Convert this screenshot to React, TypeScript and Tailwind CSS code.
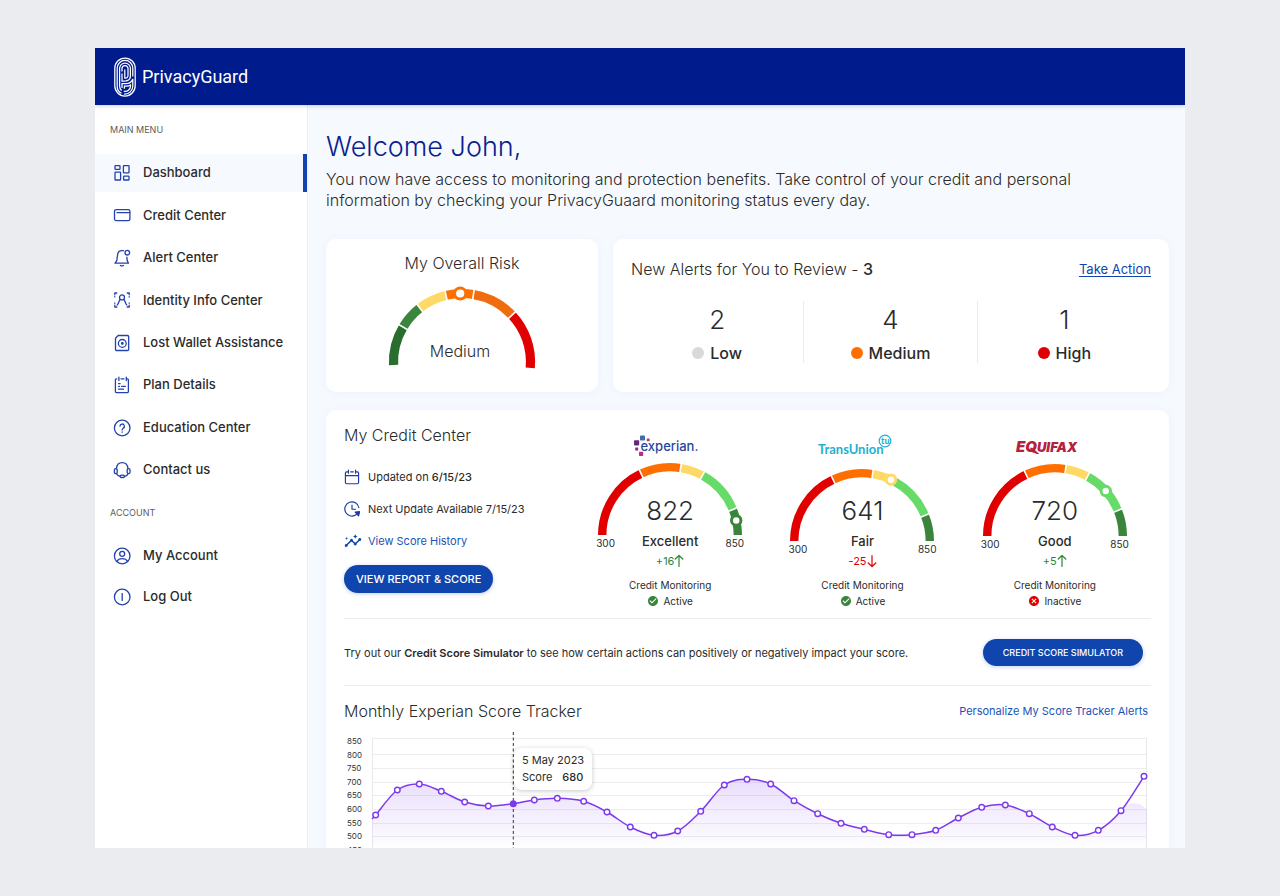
import React from "react";
import { MdCancel, MdCheckCircle, MdInsights } from "react-icons/md";

type MenuItem = {
  label: string;
  icon: React.ReactNode;
  active?: boolean;
};

type Segment = { from: number; to: number; color: string };

type Bureau = {
  name: string;
  logo: React.ReactNode;
  score: number;
  rating: string;
  change: number;
  active: boolean;
  marker: number;
  markerColor: string;
  offset: string;
};

function Icon({ children, className = "h-[18px] w-[18px]" }: { children: React.ReactNode; className?: string }) {
  return (
    <svg
      viewBox="0 0 18 18"
      className={`shrink-0 ${className}`}
      fill="none"
      stroke="currentColor"
      strokeWidth="1.3"
      strokeLinecap="round"
      strokeLinejoin="round"
      aria-hidden="true"
    >
      {children}
    </svg>
  );
}

const MAIN_MENU: MenuItem[] = [
  {
    label: "Dashboard",
    active: true,
    icon: (
      <Icon>
        <rect x="2" y="1.7" width="5" height="3.6" rx="0.6" />
        <rect x="10.4" y="1.7" width="5.6" height="7.2" rx="0.6" />
        <rect x="2" y="8.2" width="5.6" height="7.8" rx="0.6" />
        <rect x="10.6" y="12.2" width="5.4" height="3.8" rx="0.6" />
      </Icon>
    ),
  },
  {
    label: "Credit Center",
    icon: (
      <Icon>
        <rect x="1.5" y="3.6" width="15.4" height="11" rx="1.6" />
        <path d="M4 6.6h12.6" />
      </Icon>
    ),
  },
  {
    label: "Alert Center",
    icon: (
      <Icon>
        <path d="M10.6 1.6H8.8C6.3 1.6 5 3.2 4.7 5.2L3.8 11.6 2 14.2H15.500L14.200 11.600 13.900 8.200" />
        <circle cx="14.3" cy="3.7" r="2.3" />
        <path d="M7.4 16.4q1.5 1.1 3 0" />
      </Icon>
    ),
  },
  {
    label: "Identity Info Center",
    icon: (
      <Icon>
        <path d="M1.8 3.8V2h2M14.2 2h2v1.8M1.8 14.2V16h2M14.2 16h2v-1.8M1.8 5.6v.3M16.2 5.6v.3M1.8 12v.3M16.2 12v.3" />
        <circle cx="9" cy="6.4" r="2.5" />
        <path d="M7.2 8.4C5.8 9.800 5.800 12.800 4.200 14M10.800 8.400c1.400 1.400 1.400 4.400 3 5.600" />
      </Icon>
    ),
  },
  {
    label: "Lost Wallet Assistance",
    icon: (
      <Icon>
        <path d="M5.2 1.5h9.2q1.3 0 1.3 1.3v12.4q0 1.3-1.3 1.3H3.8q-1.3 0-1.3-1.3V4.3z" />
        <circle cx="9.3" cy="9.4" r="3.9" />
        <circle cx="9.3" cy="9.4" r="0.8" fill="currentColor" />
      </Icon>
    ),
  },
  {
    label: "Plan Details",
    icon: (
      <Icon>
        <path d="M3.8 2.8H3.4q-1 0-1 1v11.8q0 1 1 1h11q1 0 1-1V3.8q0-1-1-1h-.4M8 2.8h3M5.9 1.200v3.400M13.300 1.200v3.400M5.500 7.600h1.600M5.500 10.300h1M8.600 10.300h3.800M5.500 13.200h5" />
      </Icon>
    ),
  },
  {
    label: "Education Center",
    icon: (
      <Icon>
        <circle cx="9.2" cy="9" r="7.8" />
        <path d="M7 7.2a2.2 2.2 0 1 1 3.2 2c-.8.5-1 .9-1 1.7M9.2 13v.2" />
      </Icon>
    ),
  },
  {
    label: "Contact us",
    icon: (
      <Icon>
        <path d="M3.4 7.6C3.8 4 6 1.7 9.2 1.7S14.6 4 15 7.6" />
        <rect x="1.4" y="7.6" width="2.8" height="5" rx="1.3" />
        <rect x="14.2" y="7.6" width="2.8" height="5" rx="1.3" />
        <path d="M15 12.600q-.4 2-3.400 2.700M3.400 12.600q.8 2 3.600 2.700" />
        <rect x="7.2" y="14.2" width="4.2" height="2.3" rx="1.1" />
      </Icon>
    ),
  },
];

const ACCOUNT_MENU: MenuItem[] = [
  {
    label: "My Account",
    icon: (
      <Icon>
        <circle cx="9.2" cy="9" r="7.8" />
        <circle cx="9.2" cy="6.8" r="2.5" />
        <path d="M3.8 14.400c1.200-2 3.200-2.800 5.400-2.800s4.200.8 5.400 2.800" />
      </Icon>
    ),
  },
  {
    label: "Log Out",
    icon: (
      <Icon>
        <circle cx="9.2" cy="9" r="7.8" />
        <path d="M9.2 5.6v6.8" />
      </Icon>
    ),
  },
];

const ALERTS = [
  { label: "Low", count: 2, dot: "bg-[#d9d9d9]" },
  { label: "Medium", count: 4, dot: "bg-[#ff6f00]" },
  { label: "High", count: 1, dot: "bg-[#e10000]" },
];

const RISK_SEGMENTS: Segment[] = [
  { from: -2.5, to: 30.7, color: "#2a6e2f" },
  { from: 30.7, to: 52, color: "#3b863e" },
  { from: 52, to: 76.5, color: "#ffd966" },
  { from: 76.5, to: 99.6, color: "#ff6f00" },
  { from: 99.6, to: 136.8, color: "#ef6c0f" },
  { from: 136.8, to: 185, color: "#e10000" },
];

const SCORE_SEGMENTS: Segment[] = [
  { from: 0, to: 64.8, color: "#e10000" },
  { from: 64.8, to: 99, color: "#ff6f00" },
  { from: 99, to: 118.6, color: "#ffd966" },
  { from: 118.6, to: 157.9, color: "#67db67" },
  { from: 157.9, to: 180, color: "#3a843c" },
];

const BUREAUS: Bureau[] = [
  {
    name: "Experian",
    logo: <ExperianLogo />,
    score: 822,
    rating: "Excellent",
    change: 16,
    active: true,
    marker: 167.6,
    markerColor: "#3a843c",
    offset: "pt-1",
  },
  {
    name: "TransUnion",
    logo: <TransUnionLogo />,
    score: 641,
    rating: "Fair",
    change: -25,
    active: true,
    marker: 115.3,
    markerColor: "#ffd966",
    offset: "pt-2.5",
  },
  {
    name: "Equifax",
    logo: <EquifaxLogo />,
    score: 720,
    rating: "Good",
    change: 5,
    active: false,
    marker: 138.5,
    markerColor: "#67db67",
    offset: "pt-[5px]",
  },
];

const POINTS: [number, number][] = [
  [31.7, 92], [53.3, 67], [75.3, 61], [97.3, 68.3], [120.7, 79], [144.3, 83], [169.3, 80.7],
  [190.3, 77], [213.3, 75.3], [239.7, 78.3], [263, 89], [286.3, 104], [310, 112.3], [333.7, 108],
  [356.7, 88.3], [380.3, 62], [403, 56.3], [426.7, 61], [450, 77.7], [473.7, 90.7], [497, 100.3],
  [520.3, 106.3], [544.7, 111.7], [568, 111.7], [591.7, 107.3], [614.3, 95], [637.7, 84.3],
  [661.3, 82], [685.3, 90.7], [708.3, 104], [731, 112.3], [754.3, 107.3], [777, 87.7], [800, 53.3],
];

const GRID_LINES = [15.5, 31.5, 45.5, 59.5, 72.5, 86.5, 100.5, 113.5];
const SCORE_LABELS = [850, 800, 750, 700, 650, 600, 550, 500, 450];
const SELECTED = 6;

function smoothPath(points: [number, number][]) {
  return points
    .map(([x, y], i) => {
      if (i === 0) return `M${x} ${y}`;
      const p0 = points[Math.max(i - 2, 0)];
      const p1 = points[i - 1];
      const p3 = points[Math.min(i + 1, points.length - 1)];
      const c1 = [p1[0] + (x - p0[0]) / 6, p1[1] + (y - p0[1]) / 6];
      const c2 = [x - (p3[0] - p1[0]) / 6, y - (p3[1] - p1[1]) / 6];
      return `C${c1[0]} ${c1[1]} ${c2[0]} ${c2[1]} ${x} ${y}`;
    })
    .join("");
}

// angle 0 is the left end of the arc, 180 the right end
function polar(cx: number, cy: number, r: number, angle: number) {
  const rad = (angle * Math.PI) / 180;
  return [cx - r * Math.cos(rad), cy - r * Math.sin(rad)];
}

function Gauge({
  segments,
  radius,
  thickness,
  marker,
  markerColor,
  markerSize,
  cy,
  height,
  label,
}: {
  segments: Segment[];
  radius: number;
  thickness: number;
  marker: number;
  markerColor: string;
  markerSize: number;
  cy: number;
  height: number;
  label: string;
}) {
  const cx = 76;
  const [mx, my] = polar(cx, cy, radius, marker);
  return (
    <svg viewBox={`0 0 152 ${height}`} width="152" height={height} role="img" aria-label={label}>
      {segments.map(({ from, to, color }) => {
        const [x1, y1] = polar(cx, cy, radius, from);
        const [x2, y2] = polar(cx, cy, radius, to);
        return (
          <path
            key={from}
            d={`M${x1} ${y1}A${radius} ${radius} 0 0 1 ${x2} ${y2}`}
            fill="none"
            stroke={color}
            strokeWidth={thickness}
          />
        );
      })}
      {segments.slice(1).map(({ from }) => {
        const [x1, y1] = polar(cx, cy, radius - thickness, from);
        const [x2, y2] = polar(cx, cy, radius + thickness, from);
        return <line key={from} x1={x1} y1={y1} x2={x2} y2={y2} stroke="#fff" strokeWidth="1.6" />;
      })}
      <circle cx={mx} cy={my} r={markerSize} fill="#fff" stroke={markerColor} strokeWidth="3" />
    </svg>
  );
}

function BrandLogo() {
  return (
    <a href="#" className="flex items-center gap-1.5 text-white" aria-label="PrivacyGuard">
      <svg viewBox="0 0 22 40" className="h-10 w-[22px]" fill="none" stroke="currentColor" strokeWidth="1.25">
        <rect x="0.8" y="1" width="20.4" height="38" rx="10.2" />
        <path d="M7.5 36.3A7.800 7.800 0 0 1 3.200 29V11.200a7.800 7.800 0 0 1 15.600 0v8.200" />
        <path d="M7.600 33.400A5.400 5.400 0 0 1 5.600 29V11.400a5.400 5.400 0 0 1 10.800 0v7.800a4.800 4.800 0 0 1-3.200 4.400l-1.800.6" />
        <path d="M8 14.400V11.600a3 3 0 0 1 6 0v6.800a2.600 2.600 0 0 1-2.600 2.800H10.800V12.400" />
        <path d="M8 16.600V24.200h3.400M8 31V26.600h3.800c3.600 0 6.200-1.800 7-4.600v6.600A8 8 0 0 1 10 37" />
        <path d="M10.400 31.800V29h2.200c1.600 0 2.900-.4 3.900-1.100V29a5.400 5.400 0 0 1-6.700 5.300" />
      </svg>
      <span className="font-['Roboto'] text-lg">PrivacyGuard</span>
    </a>
  );
}

function ExperianLogo() {
  return (
    <svg viewBox="0 0 72 24" width="72" height="24" role="img" aria-label="Experian">
      <rect x="6" y="2.600" width="5" height="5" rx="0.8" fill="#426da9" />
      <rect x="12.8" y="5.400" width="2.8" height="2.8" rx="0.5" fill="#ba2f7d" />
      <rect x="0" y="7.200" width="5.2" height="5.2" rx="0.8" fill="#632678" />
      <rect x="1.2" y="14.600" width="3" height="3" rx="0.5" fill="#982881" />
      <rect x="5" y="18.800" width="4.2" height="4.2" rx="0.7" fill="#ba2f7d" />
      <text x="6.5" y="17.600" fontFamily="Inter, sans-serif" fontSize="13" fontWeight="500" fill="#27479d">
        experian.
      </text>
    </svg>
  );
}

function TransUnionLogo() {
  return (
    <svg viewBox="0 0 90 24" width="90" height="24" role="img" aria-label="TransUnion">
      <text x="1" y="20.5" fontFamily="Lato, sans-serif" fontSize="13" fontWeight="700" fill="#1fb0d2">
        TransUnion
      </text>
      <circle cx="68" cy="8" r="5.8" fill="none" stroke="#1fb0d2" strokeWidth="1.2" />
      <text x="64" y="11" fontFamily="Lato, sans-serif" fontSize="9" fontWeight="900" fill="#1fb0d2">
        tu
      </text>
    </svg>
  );
}

function EquifaxLogo() {
  return (
    <svg viewBox="0 0 78 24" width="78" height="24" role="img" aria-label="Equifax">
      <text
        x="0"
        y="18.5"
        fontFamily="Inter, sans-serif"
        fontSize="15"
        fontStyle="italic"
        fontWeight="900"
        fill="#b5213f"
      >
        EQ<tspan fontSize="13">UIFAX</tspan>
      </text>
      <path d="M15 17.500l5.500 3.500h2.800l-5-4.500z" fill="#b5213f" />
    </svg>
  );
}

function Menu({ items, className }: { items: MenuItem[]; className: string }) {
  return (
    <ul className={`flex flex-col justify-between ${className}`}>
      {items.map(({ label, icon, active }) => (
        <li key={label}>
          <a
            href="#"
            aria-current={active ? "page" : undefined}
            className={`flex h-[38px] items-center gap-3 border-r-4 pl-[18px] text-[13px] font-medium text-[#2b2b2b] ${
              active ? "border-[#0f45ad] bg-[#f6faff]" : "border-transparent"
            }`}
          >
            <span className="text-[#2342ab]">{icon}</span>
            {label}
          </a>
        </li>
      ))}
    </ul>
  );
}

function Sidebar() {
  return (
    <nav className="w-[213px] shrink-0 border-r border-[#eceef8] bg-white">
      <h2 className="px-[15px] pt-[17px] text-[9px] leading-4 text-[#5c5c5c]">MAIN MENU</h2>
      <Menu items={MAIN_MENU} className="mt-4 h-[335px]" />
      <h2 className="mt-4 px-[15px] text-[9px] leading-4 text-[#5c5c5c]">ACCOUNT</h2>
      <Menu items={ACCOUNT_MENU} className="mt-4 h-[79px]" />
    </nav>
  );
}

function RiskCard() {
  return (
    <section className="flex w-[272px] shrink-0 flex-col items-center rounded-[10px] bg-white pt-3 shadow-[0_1px_8px_rgba(60,90,200,0.06)]">
      <h2 className="text-[16px] leading-6 font-light text-[#2b2b2b]">My Overall Risk</h2>
      <div className="mt-2 grid justify-items-center">
        <div className="[grid-area:1/1]">
          <Gauge
            segments={RISK_SEGMENTS}
            radius={68.5}
            thickness={9.2}
            marker={88.5}
            markerColor="#ff6f00"
            markerSize={5.6}
            cy={79}
            height={86}
            label="Overall risk gauge"
          />
        </div>
        <p className="self-end pr-1 pb-1.5 text-[16px] leading-6 font-light text-[#2b2b2b] [grid-area:1/1]">Medium</p>
      </div>
    </section>
  );
}

function AlertsCard() {
  return (
    <section className="flex-1 rounded-[10px] bg-white px-[18px] pt-[18px] shadow-[0_1px_8px_rgba(60,90,200,0.06)]">
      <div className="flex items-center justify-between">
        <h2 className="text-[16px] leading-6 font-light text-[#2b2b2b]">
          New Alerts for You to Review - <span className="font-medium">3</span>
        </h2>
        <a href="#" className="text-[13px] leading-6 text-[#0f45ad] underline underline-offset-2">
          Take Action
        </a>
      </div>
      <div className="mt-5 grid grid-cols-3 divide-x divide-[#ebebeb]">
        {ALERTS.map(({ label, count, dot }) => (
          <div key={label} className="flex flex-col items-center text-[#2b2b2b]">
            <span className="text-[26px] leading-[38px] font-light">{count}</span>
            <span className="mt-1 flex items-center gap-1.5 text-[16px] leading-5 font-medium">
              <span className={`h-3 w-3 rounded-full ${dot}`} />
              {label}
            </span>
          </div>
        ))}
      </div>
    </section>
  );
}

function BureauScore({ bureau }: { bureau: Bureau }) {
  const up = bureau.change > 0;
  return (
    <div className="flex flex-col items-center pt-2.5 text-[#2b2b2b]">
      {bureau.logo}
      <div className="grid justify-items-center">
        <div className={`[grid-area:1/1] ${bureau.offset}`}>
          <Gauge
            segments={SCORE_SEGMENTS}
            radius={67.8}
            thickness={8.4}
            marker={bureau.marker}
            markerColor={bureau.markerColor}
            markerSize={4.7}
            cy={74}
            height={74}
            label={`${bureau.name} score gauge`}
          />
          <div className="flex justify-between px-0.5 pt-0.5 text-[10px] leading-3">
            <span>300</span>
            <span>850</span>
          </div>
        </div>
        <div className="flex flex-col items-center pt-9 [grid-area:1/1]">
          <span className="text-[26px] leading-9 font-light">{bureau.score}</span>
          <span className="mt-0.5 text-[13px] leading-5 font-medium">{bureau.rating}</span>
          <span className={`mt-0.5 flex items-center text-[11px] leading-4 ${up ? "text-[#2f8436]" : "text-[#e10000]"}`}>
            {up ? `+${bureau.change}` : bureau.change}
            <svg
              viewBox="0 0 10 14"
              className="h-3.5 w-2.5"
              fill="none"
              stroke="currentColor"
              strokeWidth="1.2"
              strokeLinecap="round"
              strokeLinejoin="round"
              aria-hidden="true"
            >
              <path d={up ? "M5 12.5V1.5M1.2 5 5 1.5 8.8 5" : "M5 1.5V12.5M1.2 9 5 12.5 8.8 9"} />
            </svg>
          </span>
        </div>
      </div>
      <span className="mt-2 text-[10px] leading-4">Credit Monitoring</span>
      <span className="flex items-center gap-1 text-[10px] leading-4">
        {bureau.active ? (
          <MdCheckCircle className="h-3 w-3 text-[#3a843c]" />
        ) : (
          <MdCancel className="h-3 w-3 text-[#e10000]" />
        )}
        {bureau.active ? "Active" : "Inactive"}
      </span>
    </div>
  );
}

function ScoreChart() {
  const line = `M28 96L${smoothPath(POINTS).slice(1)}`;
  const area = `M28 96L${smoothPath(POINTS.slice(0, -1)).slice(1)}C781 79 795 77 803 87V134H28Z`;
  const [sx] = POINTS[SELECTED];
  return (
    <div className="relative">
      <svg viewBox="0 0 807 134" className="block w-full" role="img" aria-label="Monthly Experian scores">
        <defs>
          <linearGradient id="score-area" x1="0" y1="50" x2="0" y2="124" gradientUnits="userSpaceOnUse">
            <stop offset="0" stopColor="#7c3aed" stopOpacity="0.18" />
            <stop offset="1" stopColor="#7c3aed" stopOpacity="0.01" />
          </linearGradient>
        </defs>
        {GRID_LINES.map((y) => (
          <line key={y} x1="28" y1={y} x2="803" y2={y} stroke="#ededf0" />
        ))}
        <path d="M28.5 15V134M802.5 15V134" stroke="#e9e9ec" />
        {SCORE_LABELS.map((score, i) => (
          <text key={score} x="3" y={21 + i * 13.6} fontFamily="Inter, sans-serif" fontSize="8" fill="#333">
            {score}
          </text>
        ))}
        <path d={area} fill="url(#score-area)" />
        <path d={`M${sx} 9V134`} stroke="#333" strokeDasharray="3 2.5" />
        <path d={line} fill="none" stroke="#7c3aed" strokeWidth="1.5" />
        {POINTS.map(([x, y], i) => (
          <circle
            key={x}
            cx={x}
            cy={y}
            r="2.8"
            fill={i === SELECTED ? "#7c3aed" : "#fff"}
            stroke="#7c3aed"
            strokeWidth="1.4"
          />
        ))}
      </svg>
      <div className="absolute top-[25px] left-[170px] rounded-lg bg-white px-2 py-1 text-[11px] leading-[17px] text-[#2b2b2b] shadow-[0_1px_5px_rgba(0,0,0,0.22)]">
        <div>5 May 2023</div>
        <div className="flex gap-2.5">
          Score <span className="font-medium">680</span>
        </div>
      </div>
    </div>
  );
}

function CreditCenter() {
  return (
    <section className="mt-[18px] rounded-[10px] bg-white px-[18px] pt-[13px] shadow-[0_1px_8px_rgba(60,90,200,0.06)]">
      <div className="flex border-b border-[#ededed] pb-[9px]">
        <div className="w-[230px] shrink-0 text-[11px] text-[#2b2b2b]">
          <h2 className="text-[16px] leading-6 font-light">My Credit Center</h2>
          <ul className="mt-5 flex flex-col gap-3 leading-5">
            <li className="flex items-center gap-2">
              <Icon className="h-4 w-4 text-[#1d3aa5]">
                <path d="M4.5 3.2H3q-1.4 0-1.4 1.4v10.6q0 1.4 1.4 1.4h12q1.400 0 1.400-1.400V4.600q0-1.400-1.400-1.400h-1.500M7.500 3.200h3M1.600 7.400h14.800M5 1.200v3.600M13 1.200v3.600" />
              </Icon>
              <span>
                Updated on <span className="font-medium">6/15/23</span>
              </span>
            </li>
            <li className="flex items-center gap-2">
              <Icon className="h-4 w-4 text-[#1d3aa5]">
                <path d="M16.8 7.6A8 8 0 1 0 14 15.2M9 4.6V9.3h4" />
                <path d="M12.6 12.4l5-.4-1.200 4.800z" fill="currentColor" />
              </Icon>
              Next Update Available 7/15/23
            </li>
            <li>
              <a href="#" className="flex items-center gap-1.5 text-[#1a53b8]">
                <MdInsights className="h-[18px] w-[18px] text-[#0f45ad]" />
                View Score History
              </a>
            </li>
          </ul>
          <button className="mt-3.5 h-7 rounded-full bg-[#0f45ad] px-3 text-[11px] font-medium text-white shadow-[0_1px_4px_rgba(15,69,173,0.25)]">
            VIEW REPORT &amp; SCORE
          </button>
        </div>
        <div className="grid flex-1 grid-cols-3">
          {BUREAUS.map((bureau) => (
            <BureauScore key={bureau.name} bureau={bureau} />
          ))}
        </div>
      </div>
      <div className="flex items-center justify-between border-b border-[#ededed] pt-5 pr-2 pb-[19px]">
        <p className="text-[11px] leading-5 text-[#2b2b2b]">
          Try out our <span className="font-semibold">Credit Score Simulator</span> to see how certain actions can
          positively or negatively impact your score.
        </p>
        <button className="h-[27px] rounded-full bg-[#0f45ad] px-5 text-[9px] font-medium text-white shadow-[0_1px_4px_rgba(15,69,173,0.25)]">
          CREDIT SCORE SIMULATOR
        </button>
      </div>
      <div className="flex items-center justify-between pt-[13px] pr-[3px]">
        <h2 className="text-[16px] leading-6 font-light text-[#2b2b2b]">Monthly Experian Score Tracker</h2>
        <a href="#" className="text-[11px] text-[#1a53b8]">
          Personalize My Score Tracker Alerts
        </a>
      </div>
      <ScoreChart />
    </section>
  );
}

export default function App() {
  return (
    <div className="h-screen bg-[#ebecf0] px-[95px] py-12 font-['Inter',sans-serif]">
      <div className="flex h-full flex-col overflow-hidden bg-[#f6faff]">
        <header className="relative z-10 flex h-[57px] shrink-0 items-center bg-[#001b8c] px-[19px] shadow-[0_1px_4px_rgba(0,0,0,0.2)]">
          <BrandLogo />
        </header>
        <div className="flex min-h-0 flex-1">
          <Sidebar />
          <main className="min-w-0 flex-1 pt-6 pr-4 pl-[18px]">
            <h1 className="text-[27px] leading-9 font-light text-[#0a228f]">Welcome John,</h1>
            <p className="mt-1 max-w-[800px] text-[16px] leading-[21px] font-light text-[#2b2b2b]">
              You now have access to monitoring and protection benefits. Take control of your credit and personal
              information by checking your PrivacyGuaard monitoring status every day.
            </p>
            <div className="mt-7 flex h-[153px] gap-[15px]">
              <RiskCard />
              <AlertsCard />
            </div>
            <CreditCenter />
          </main>
        </div>
      </div>
    </div>
  );
}
